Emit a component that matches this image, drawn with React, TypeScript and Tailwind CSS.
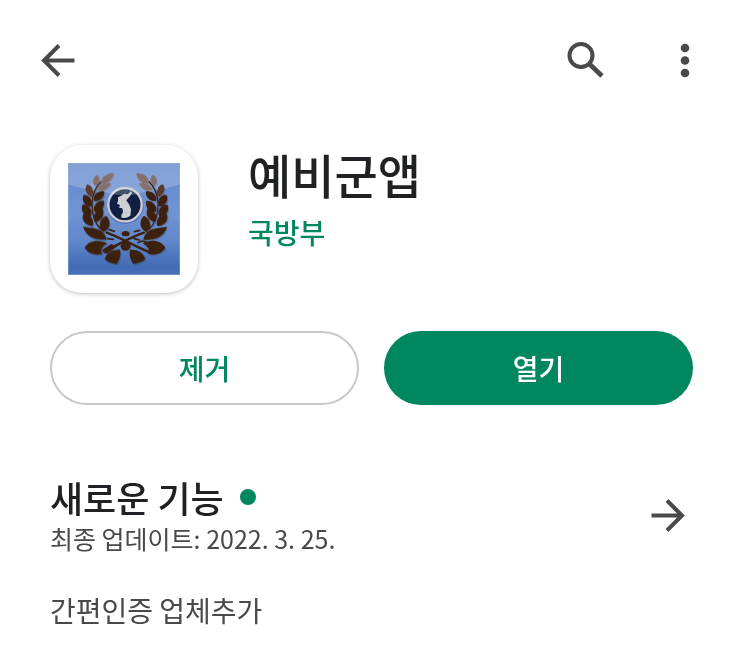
interface ArrowProps {
  className?: string;
}

interface LeafProps {
  x: number;
  y: number;
  length: number;
  width: number;
  angle: number;
  color: string;
}

const DARK = '#3d210f';
const PALE = '#866f6b';

// One side of the wreath, x and y are the centre of each leaf
const leaves: LeafProps[] = [
  { x: 202, y: 131, length: 48, width: 22, angle: -38, color: PALE },
  { x: 169, y: 137, length: 34, width: 19, angle: -80, color: PALE },
  { x: 193, y: 156, length: 44, width: 19, angle: -26, color: PALE },
  { x: 148, y: 168, length: 40, width: 21, angle: 72, color: '#5a3a2b' },
  { x: 177, y: 184, length: 42, width: 23, angle: -42, color: DARK },
  { x: 142, y: 198, length: 42, width: 24, angle: 58, color: DARK },
  { x: 177, y: 215, length: 44, width: 25, angle: -50, color: DARK },
  { x: 140, y: 228, length: 44, width: 26, angle: 58, color: DARK },
  { x: 176, y: 242, length: 46, width: 25, angle: -58, color: DARK },
  { x: 144, y: 256, length: 46, width: 26, angle: 50, color: DARK },
  { x: 194, y: 268, length: 50, width: 30, angle: -80, color: DARK },
];

function Leaf({ x, y, length, width, angle, color }: LeafProps) {
  const l = length / 2;
  return (
    <path
      transform={`translate(${x} ${y}) rotate(${angle})`}
      d={`M${-l} 0C${-l / 2} ${-width * 0.7} ${l / 2} ${-width * 0.6} ${l} 0C${l / 2} ${width * 0.6} ${-l / 2} ${width * 0.7} ${-l} 0Z`}
      fill={color}
    />
  );
}

function WreathSide() {
  return (
    <g>
      <path d="M184 140C166 158 157 180 156 205C155 238 162 262 182 284" fill="none" stroke={DARK} strokeWidth="4" />
      {leaves.map((leaf) => (
        <Leaf key={`${leaf.x}-${leaf.y}`} {...leaf} />
      ))}
      <path d="M129 276C155 282 192 276 200 315C168 316 139 310 129 276Z" fill={DARK} />
      <path d="M134 339C148 314 179 314 202 326C184 336 180 348 188 356C167 365 143 356 134 339Z" fill={DARK} />
      <path d="M194 373C200 354 216 344 240 345C244 361 238 376 230 388C216 386 203 382 194 373Z" fill={DARK} />
    </g>
  );
}

function Emblem() {
  return (
    <svg viewBox="84 85 336 336" className="h-full w-full" aria-hidden="true">
      <defs>
        <linearGradient id="sky" x1="0" y1="0" x2="0" y2="1">
          <stop offset="0" stopColor="#6389cc" />
          <stop offset="0.45" stopColor="#7094d3" />
          <stop offset="0.7" stopColor="#6087ca" />
          <stop offset="0.93" stopColor="#426bb5" />
          <stop offset="1" stopColor="#4a73bb" />
        </linearGradient>
      </defs>
      <rect x="84" y="85" width="336" height="336" fill="url(#sky)" />
      <path d="M84 85H420V149Q252 205 84 149Z" fill="#ffffff" opacity="0.2" />
      <g opacity="0.25" transform="translate(3 4)">
        <WreathSide />
        <g transform="translate(510 0) scale(-1 1)">
          <WreathSide />
        </g>
      </g>
      <WreathSide />
      <g transform="translate(510 0) scale(-1 1)">
        <WreathSide />
      </g>
      {/* crossed rifle and sabre */}
      <g fill="none" stroke={DARK} strokeLinecap="round">
        <path d="M200 294C238 307 278 332 323 350" strokeWidth="7" />
        <path d="M312 294C275 306 235 330 205 344" strokeWidth="7" />
        <path d="M207 285L223 290M203 312L220 314M283 291L299 287M282 312L298 316" strokeWidth="5" />
        <path d="M294 324C314 311 334 328 332 350" strokeWidth="5" />
      </g>
      <path d="M187 345L214 328L232 335L204 356Q190 359 187 345Z" fill={DARK} />
      <ellipse cx="257" cy="297" rx="12" ry="8" fill={DARK} />
      <ellipse cx="257" cy="335" rx="15" ry="13" fill={DARK} />
      <circle cx="256" cy="213" r="55" fill="#40588b" opacity="0.5" />
      <circle cx="255" cy="210" r="50" fill="#111f43" stroke="#cbcdd6" strokeWidth="7" />
      <path d="M210 178C228 154 282 154 300 178Q255 184 210 178Z" fill="#ffffff" opacity="0.22" />
      <path
        d="M273 169L276 176L266 189L259 197L268 210L273 224L271 243L260 249L245 250L244 241L249 233L247 221L237 219L240 211L231 207L234 199L234 188L246 182L252 177L264 179Z"
        fill="#cfd0d6"
      />
      <rect x="85" y="86" width="334" height="334" fill="none" stroke="#a3b7df" strokeWidth="2" opacity="0.6" />
    </svg>
  );
}

function ArrowLeft({ className }: ArrowProps) {
  return (
    <svg viewBox="0 0 36 36" className={className} fill="none" stroke="currentColor" strokeWidth="4" aria-hidden="true">
      <path d="M34.5 18.5H5M19 3.5L4 18.5L19 33.5" />
    </svg>
  );
}

export default function App() {
  return (
    <div className="bg-white font-['Noto_Sans_CJK_KR',sans-serif] text-[#202124]">
      <header className="flex items-center justify-between pt-10 pr-[38px] pl-10 text-[#494949]">
        <button type="button" aria-label="뒤로" className="h-10">
          <ArrowLeft className="h-9 w-9" />
        </button>
        <div className="flex items-center gap-[60px]">
          <button type="button" aria-label="검색" className="h-10">
            <svg viewBox="0 0 40 40" className="h-10 w-10" fill="none" stroke="currentColor" aria-hidden="true">
              <circle cx="16" cy="15.5" r="11.5" strokeWidth="4" />
              <path d="M24.5 24L37 36" strokeWidth="4.8" />
            </svg>
          </button>
          <button type="button" aria-label="더보기" className="h-10">
            <svg viewBox="0 0 40 40" className="h-10 w-10" fill="currentColor" aria-hidden="true">
              <circle cx="20" cy="8" r="4.3" />
              <circle cx="20" cy="20.5" r="4.3" />
              <circle cx="20" cy="33" r="4.3" />
            </svg>
          </button>
        </div>
      </header>

      <main className="px-[50px] pt-[65px] pb-5">
        <section className="flex gap-[50px]">
          <div className="h-[148px] w-[148px] shrink-0 rounded-[32px] bg-white p-[18px] shadow-[0_1px_4px_rgba(0,0,0,0.25)]">
            <Emblem />
          </div>
          <div>
            <h1 className="text-[47px] leading-[58px] font-medium">예비군앱</h1>
            <a href="#developer" className="block text-[28px] leading-[58px] font-medium text-[#01875f]">
              국방부
            </a>
          </div>
        </section>

        <div className="mt-[38px] grid grid-cols-2 gap-[25px] text-[28px] font-medium">
          <button type="button" className="h-[74px] rounded-full border-2 border-[#c8c8c8] text-[#01875f]">
            제거
          </button>
          <button type="button" className="h-[74px] rounded-full bg-[#01875f] text-white">
            열기
          </button>
        </div>

        <section className="mt-[70px]">
          <div className="flex items-center justify-between pr-[7px]">
            <div>
              <h2 className="flex items-center gap-4 text-[36px] leading-[44px] font-medium">
                새로운 기능
                <span className="h-4 w-4 rounded-full bg-[#01875f]" />
              </h2>
              <p className="text-[25px] leading-[38px] text-[#494949]">최종 업데이트: 2022. 3. 25.</p>
            </div>
            <button type="button" aria-label="새로운 기능 자세히 보기" className="text-[#494949]">
              <ArrowLeft className="h-9 w-9 rotate-180" />
            </button>
          </div>
          <p className="mt-[33px] text-[28px] leading-[40px] text-[#494949]">간편인증 업체추가</p>
        </section>
      </main>
    </div>
  );
}
